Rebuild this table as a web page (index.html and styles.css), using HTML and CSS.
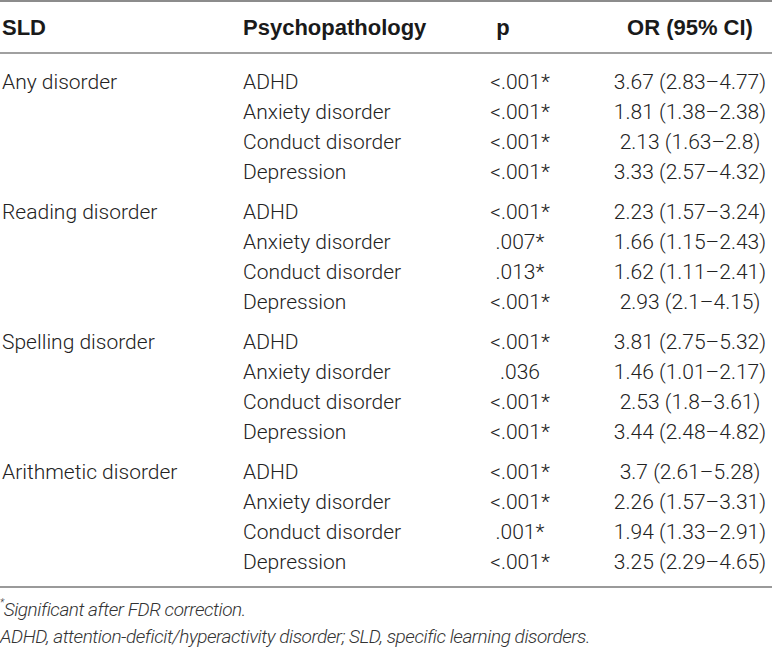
FILE: index.html
```html
<!DOCTYPE html>
<html lang="en">
<head>
    <meta charset="UTF-8">
    <meta name="viewport" content="width=device-width, initial-scale=1.0">
    <title>SLD and psychopathology</title>
    <link rel="stylesheet" href="styles.css">
</head>
<body>
    <table class="data-table">
        <thead>
            <tr>
                <th class="col-sld">SLD</th>
                <th class="col-psy">Psychopathology</th>
                <th class="col-p">p</th>
                <th class="col-or">OR (95% CI)</th>
            </tr>
        </thead>
        <tbody>
            <tr class="group-start">
                <td>Any disorder</td><td>ADHD</td><td class="num-p">&lt;.001*</td><td class="num-or">3.67 (2.83–4.77)</td>
            </tr>
            <tr>
                <td></td><td>Anxiety disorder</td><td class="num-p">&lt;.001*</td><td class="num-or">1.81 (1.38–2.38)</td>
            </tr>
            <tr>
                <td></td><td>Conduct disorder</td><td class="num-p">&lt;.001*</td><td class="num-or">2.13 (1.63–2.8)</td>
            </tr>
            <tr>
                <td></td><td>Depression</td><td class="num-p">&lt;.001*</td><td class="num-or">3.33 (2.57–4.32)</td>
            </tr>
            <tr class="group-start">
                <td>Reading disorder</td><td>ADHD</td><td class="num-p">&lt;.001*</td><td class="num-or">2.23 (1.57–3.24)</td>
            </tr>
            <tr>
                <td></td><td>Anxiety disorder</td><td class="num-p">.007*</td><td class="num-or">1.66 (1.15–2.43)</td>
            </tr>
            <tr>
                <td></td><td>Conduct disorder</td><td class="num-p">.013*</td><td class="num-or">1.62 (1.11–2.41)</td>
            </tr>
            <tr>
                <td></td><td>Depression</td><td class="num-p">&lt;.001*</td><td class="num-or">2.93 (2.1–4.15)</td>
            </tr>
            <tr class="group-start">
                <td>Spelling disorder</td><td>ADHD</td><td class="num-p">&lt;.001*</td><td class="num-or">3.81 (2.75–5.32)</td>
            </tr>
            <tr>
                <td></td><td>Anxiety disorder</td><td class="num-p">.036</td><td class="num-or">1.46 (1.01–2.17)</td>
            </tr>
            <tr>
                <td></td><td>Conduct disorder</td><td class="num-p">&lt;.001*</td><td class="num-or">2.53 (1.8–3.61)</td>
            </tr>
            <tr>
                <td></td><td>Depression</td><td class="num-p">&lt;.001*</td><td class="num-or">3.44 (2.48–4.82)</td>
            </tr>
            <tr class="group-start">
                <td>Arithmetic disorder</td><td>ADHD</td><td class="num-p">&lt;.001*</td><td class="num-or">3.7 (2.61–5.28)</td>
            </tr>
            <tr>
                <td></td><td>Anxiety disorder</td><td class="num-p">&lt;.001*</td><td class="num-or">2.26 (1.57–3.31)</td>
            </tr>
            <tr>
                <td></td><td>Conduct disorder</td><td class="num-p">.001*</td><td class="num-or">1.94 (1.33–2.91)</td>
            </tr>
            <tr class="group-end">
                <td></td><td>Depression</td><td class="num-p">&lt;.001*</td><td class="num-or">3.25 (2.29–4.65)</td>
            </tr>
        </tbody>
    </table>

    <div class="table-notes">
        <p><sup>*</sup>Significant after FDR correction.</p>
        <p>ADHD, attention-deficit/hyperactivity disorder; SLD, specific learning disorders.</p>
    </div>
</body>
</html>
```

FILE: styles.css
```css
* {
    margin: 0;
    padding: 0;
    box-sizing: border-box;
}

body {
    font-family: Roboto, 'Liberation Sans', sans-serif;
    font-weight: 300;
    color: #222;
    background: #fff;
    width: 772px;
}

.data-table {
    width: 772px;
    border-collapse: collapse;
    table-layout: fixed;
    border-top: 2px solid #8c8c8c;
    border-bottom: 2px solid #9a9a9a;
}

.data-table th {
    font-family: 'Liberation Sans', Arial, sans-serif;
    font-weight: 700;
    font-size: 22px;
    line-height: 30px;
    color: #1a1a1a;
    padding: 11px 0 9px 0;
    border-bottom: 2px solid #a0a0a0;
    text-align: left;
}

.data-table td {
    font-size: 21px;
    line-height: 30px;
    padding: 0;
    white-space: nowrap;
}

.col-sld {
    width: 243px;
    padding-left: 2px !important;
}

.col-psy {
    width: 197px;
}

.col-p {
    width: 160px;
    text-align: center !important;
    padding-right: 34px !important;
}

.col-or {
    width: 172px;
    text-align: center !important;
    padding-left: 8px !important;
}

.data-table td:first-child {
    padding-left: 2px;
}

.num-p {
    text-align: center;
}

.num-or {
    text-align: center;
    padding-left: 8px !important;
}

.group-start td {
    padding-top: 10px;
}

tbody tr:first-child td {
    padding-top: 13px;
}

.group-end td {
    padding-bottom: 9px;
}

.table-notes {
    padding-top: 8px;
    font-style: italic;
    font-size: 19px;
    letter-spacing: -0.45px;
    line-height: 27px;
    color: #333;
}

.table-notes sup {
    font-size: 10px;
    vertical-align: top;
    line-height: 14px;
}
```
